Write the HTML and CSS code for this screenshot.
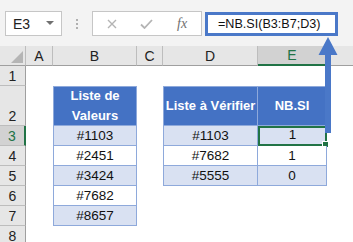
FILE: index.html
```html
<!DOCTYPE html>
<html>
<head>
<meta charset="utf-8">
<link rel="stylesheet" href="styles.css">
</head>
<body>
<div class="app">
  <div class="fbar">
    <div class="namebox"><span class="ref">E3</span><span class="caret"></span></div>
    <div class="dots"><i></i><i></i><i></i></div>
    <div class="fbox">
      <svg class="ico-x" width="10" height="10" viewBox="0 0 10 10"><path d="M1 1L9 9M9 1L1 9" stroke="#b4b4b4" stroke-width="1.4" fill="none"/></svg>
      <svg class="ico-ok" width="13" height="10" viewBox="0 0 13 10"><path d="M1 5.5L4.5 9L12 1" stroke="#b4b4b4" stroke-width="1.8" fill="none"/></svg>
      <span class="fx">fx</span>
    </div>
    <div class="formula">=NB.SI(B3:B7;D3)</div>
  </div>
  <div class="sheet">
    <div class="ch corner"><span class="tri"></span></div>
    <div class="ch">A</div>
    <div class="ch">B</div>
    <div class="ch">C</div>
    <div class="ch">D</div>
    <div class="ch sel">E</div>
    <div class="ch last"></div>

    <div class="rh">1</div>
    <div class="c"></div><div class="c"></div><div class="c"></div><div class="c"></div><div class="c"></div><div class="c"></div>

    <div class="rh tall">2</div>
    <div class="c"></div>
    <div class="c th first top">Liste de<br>Valeurs</div>
    <div class="c"></div>
    <div class="c th first top">Liste à Vérifier</div>
    <div class="c th top">NB.SI</div>
    <div class="c"></div>

    <div class="rh rsel">3</div>
    <div class="c"></div>
    <div class="c td band first">#1103</div>
    <div class="c"></div>
    <div class="c td band first">#1103</div>
    <div class="c td band active">1<span class="handle"></span></div>
    <div class="c"></div>

    <div class="rh">4</div>
    <div class="c"></div>
    <div class="c td first">#2451</div>
    <div class="c"></div>
    <div class="c td first">#7682</div>
    <div class="c td">1</div>
    <div class="c"></div>

    <div class="rh">5</div>
    <div class="c"></div>
    <div class="c td band first">#3424</div>
    <div class="c"></div>
    <div class="c td band first">#5555</div>
    <div class="c td band">0</div>
    <div class="c"></div>

    <div class="rh">6</div>
    <div class="c"></div>
    <div class="c td first">#7682</div>
    <div class="c"></div><div class="c"></div><div class="c"></div><div class="c"></div>

    <div class="rh">7</div>
    <div class="c"></div>
    <div class="c td band first">#8657</div>
    <div class="c"></div><div class="c"></div><div class="c"></div><div class="c"></div>

    <div class="rh">8</div>
    <div class="c"></div><div class="c"></div><div class="c"></div><div class="c"></div><div class="c"></div><div class="c"></div>
  </div>
  <svg class="arrow" width="22" height="100" viewBox="0 0 22 100">
    <path d="M11 0L20.5 18H14V96H8V18H1.5Z" fill="#4a78c8"/>
  </svg>
</div>
</body>
</html>
```
FILE: styles.css
```css
html, body { margin: 0; padding: 0; }
body { width: 353px; height: 242px; overflow: hidden; background: #fff; font-family: "Liberation Sans", Arial, sans-serif; }
.app { position: relative; width: 353px; height: 242px; overflow: hidden; }

.fbar { height: 46px; background: #f3f3f3; display: flex; align-items: flex-start; box-sizing: border-box; padding-top: 11px; }
.namebox { margin-left: 5px; width: 57px; height: 25px; box-sizing: border-box; background: #fff; border: 1px solid #c6c6c6; display: flex; align-items: center; justify-content: space-between; padding: 0 7px 0 7px; }
.ref { font-size: 14px; color: #222; }
.caret { width: 0; height: 0; border-left: 4px solid transparent; border-right: 4px solid transparent; border-top: 4px solid #707070; margin-bottom: 2px; }
.dots { width: 30px; height: 25px; display: flex; flex-direction: column; align-items: center; justify-content: center; gap: 2px; }
.dots i { width: 2px; height: 2px; background: #b0b0b0; display: block; }
.fbox { width: 110px; height: 25px; box-sizing: border-box; background: #fff; border: 1px solid #c6c6c6; display: flex; align-items: center; padding-left: 14px; }
.ico-x { margin-right: 23px; }
.ico-ok { margin-right: 24px; }
.fx { font-family: "Liberation Serif", serif; font-style: italic; font-size: 14px; color: #707070; }
.formula { margin-left: 3px; margin-top: 1px; width: 133px; height: 24px; box-sizing: border-box; background: #fff; border: 3px solid #4a78c8; font-size: 12.6px; color: #111; line-height: 18px; padding-left: 10px; white-space: nowrap; }

.sheet { display: grid; grid-template-columns: 26px 27px 84px 26px 95px 69px 26px; grid-template-rows: 20px 20px 40px 20px 20px 20px 20px 20px 20px; }
.ch { background: #e6e6e6; border-right: 1px solid #bdbdbd; border-bottom: 1px solid #9f9f9f; box-sizing: border-box; font-size: 14px; color: #222; display: flex; align-items: center; justify-content: center; }
.ch.last { border-right: none; }
.ch.sel { background: #d2d2d2; color: #217346; border-bottom: 2px solid #217346; }
.corner { position: relative; }
.tri { width: 0; height: 0; border-left: 12px solid transparent; border-bottom: 12px solid #b5b5b5; position: absolute; right: 2px; bottom: 2px; }
.rh { background: #e6e6e6; border-right: 1px solid #9f9f9f; border-bottom: 1px solid #bdbdbd; box-sizing: border-box; font-size: 14px; color: #222; display: flex; align-items: flex-end; justify-content: center; padding-bottom: 1px; }
.rh.rsel { background: #d2d2d2; color: #217346; border-right: 2px solid #217346; }
.c { box-sizing: border-box; font-size: 13.5px; color: #111; display: flex; align-items: flex-end; justify-content: center; padding-bottom: 2px; position: relative; }
.th { background: #4472c4; color: #fff; font-weight: bold; font-size: 13px; align-items: center; text-align: center; line-height: 20px; padding-bottom: 0; white-space: nowrap; border-right: 1px solid #8ea9db; border-bottom: 1px solid #8ea9db; }
.td { background: #fff; border-right: 1px solid #8ea9db; border-bottom: 1px solid #8ea9db; }
.td.band { background: #d9e1f2; }
.first { border-left: 1px solid #8ea9db; }
.top { border-top: 1px solid #8ea9db; }
.active { border: 2px solid #217346; }
.handle { position: absolute; right: -4px; bottom: -4px; width: 5px; height: 5px; background: #217346; border: 1px solid #fff; }

.arrow { position: absolute; left: 317px; top: 37px; }
```
